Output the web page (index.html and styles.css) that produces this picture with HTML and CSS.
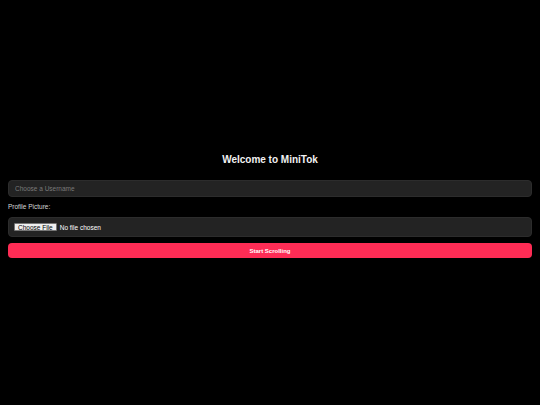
FILE: index.html
```html
<!DOCTYPE html>
<html lang="en">
<head>
<meta charset="utf-8">
<title>MiniTok</title>
<link rel="stylesheet" href="styles.css">
</head>
<body>
<main class="screen">
  <form class="signup">
    <h1 class="title">Welcome to MiniTok</h1>
    <input class="field text-field" type="text" placeholder="Choose a Username">
    <label class="label" for="pic">Profile Picture:</label>
    <div class="field file-field">
      <input id="pic" class="file-input" type="file" accept="image/*">
    </div>
    <button class="start" type="button">Start Scrolling</button>
  </form>
</main>
</body>
</html>
```

FILE: styles.css
```css
* { box-sizing: border-box; }
html, body { margin: 0; height: 100%; background: #000; }
body {
  font-family: "Liberation Sans", Arial, sans-serif;
  color: #fff;
}
.screen {
  height: 100%;
  display: flex;
  align-items: center;
  padding: 7px 8px 0 8px;
}
.signup {
  width: 100%;
  display: flex;
  flex-direction: column;
}
.title {
  margin: 0 0 14px;
  font-size: 10px;
  line-height: 12px;
  font-weight: bold;
  text-align: center;
  color: #f2f2f2;
}
.field {
  width: 100%;
  background: #232323;
  border: 1px solid #2c2c2c;
  border-radius: 4px;
  color: #fff;
  font-family: inherit;
}
.text-field {
  height: 17px;
  padding: 0 6px;
  font-size: 6.5px;
  outline: none;
}
.text-field::placeholder { color: #7a7a7a; }
.label {
  margin: 6px 0 6px;
  font-size: 6.5px;
  line-height: 8px;
  color: #d8d8d8;
}
.file-field {
  height: 20px;
  padding: 0 5px;
  display: flex;
  align-items: center;
}
.file-input {
  font-family: inherit;
  font-size: 6.5px;
  color: #fff;
}
.file-input::file-selector-button {
  font-family: inherit;
  font-size: 6.5px;
  line-height: 7px;
  padding: 0 3px;
  height: 8px;
  margin-right: 3px;
  background: #efefef;
  color: #000;
  border: 0.5px solid #767676;
  border-radius: 1px;
}
.start {
  margin-top: 6px;
  height: 15px;
  border: none;
  border-radius: 4px;
  background: #fe2c55;
  color: #fff;
  font-family: inherit;
  font-size: 6px;
  font-weight: bold;
}
```
